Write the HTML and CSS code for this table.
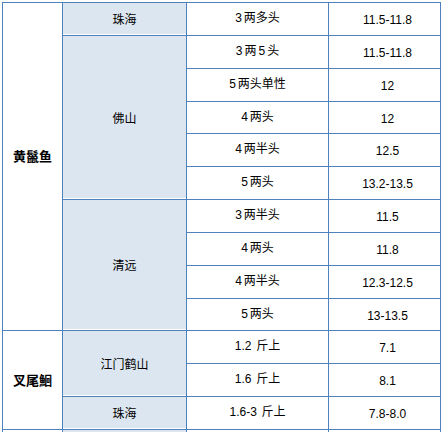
FILE: index.html
```html
<!DOCTYPE html>
<html lang="zh-CN">
<head>
<meta charset="utf-8">
<title>鱼价表</title>
<link rel="stylesheet" href="styles.css">
</head>
<body>
<table class="grid">
  <colgroup>
    <col class="c-fish">
    <col class="c-area">
    <col class="c-spec">
    <col class="c-price">
  </colgroup>
  <tbody>
    <tr class="r33">
      <td class="fish fish-top" rowspan="10">黄鬣鱼</td>
      <td class="area">珠海</td>
      <td class="spec"><span class="n">3</span>两多头</td>
      <td class="price">11.5-11.8</td>
    </tr>
    <tr class="r33">
      <td class="area" rowspan="5">佛山</td>
      <td class="spec"><span class="n">3</span>两<span class="n n-mid">5</span>头</td>
      <td class="price">11.5-11.8</td>
    </tr>
    <tr class="r33">
      <td class="spec"><span class="n">5</span>两头单性</td>
      <td class="price">12</td>
    </tr>
    <tr class="r32">
      <td class="spec"><span class="n">4</span>两头</td>
      <td class="price">12</td>
    </tr>
    <tr class="r33">
      <td class="spec"><span class="n">4</span>两半头</td>
      <td class="price">12.5</td>
    </tr>
    <tr class="r33">
      <td class="spec"><span class="n">5</span>两头</td>
      <td class="price">13.2-13.5</td>
    </tr>
    <tr class="r33">
      <td class="area" rowspan="4">清远</td>
      <td class="spec"><span class="n">3</span>两半头</td>
      <td class="price">11.5</td>
    </tr>
    <tr class="r33">
      <td class="spec"><span class="n">4</span>两头</td>
      <td class="price">11.8</td>
    </tr>
    <tr class="r33">
      <td class="spec"><span class="n">4</span>两半头</td>
      <td class="price">12.3-12.5</td>
    </tr>
    <tr class="r32">
      <td class="spec"><span class="n">5</span>两头</td>
      <td class="price">13-13.5</td>
    </tr>
    <tr class="r33">
      <td class="fish" rowspan="3">叉尾鮰</td>
      <td class="area" rowspan="2">江门鹤山</td>
      <td class="spec"><span class="n">1.2</span> 斤上</td>
      <td class="price">7.1</td>
    </tr>
    <tr class="r33">
      <td class="spec"><span class="n">1.6</span> 斤上</td>
      <td class="price">8.1</td>
    </tr>
    <tr class="r33">
      <td class="area">珠海</td>
      <td class="spec"><span class="n">1.6-3</span> 斤上</td>
      <td class="price">7.8-8.0</td>
    </tr>
    <tr class="r33">
      <td class="fish"></td>
      <td class="area"></td>
      <td class="spec"></td>
      <td class="price"></td>
    </tr>
  </tbody>
</table>
</body>
</html>
```

FILE: styles.css
```css
html, body {
  margin: 0;
  padding: 0;
  background: #ffffff;
}

body {
  padding: 2px 0 0 2px;
  font-family: "Liberation Sans", "Noto Sans CJK SC", sans-serif;
  font-size: 12px;
  color: #000000;
}

.grid {
  border-collapse: collapse;
  table-layout: fixed;
  width: 438px;
}

.c-fish { width: 60px; }
.c-area { width: 124px; }
.c-spec { width: 142px; }
.c-price { width: 112px; }

.grid td {
  border: 1px solid #4f81bd;
  padding: 0;
  text-align: center;
  vertical-align: middle;
  line-height: 14px;
  white-space: nowrap;
}

.r33 { height: 33px; }
.r32 { height: 32px; }

.fish {
  font-family: "Noto Sans CJK SC", sans-serif;
  font-weight: bold;
  font-size: 13px;
}

.fish-top {
  padding-bottom: 22px !important;
}

.area {
  background: #dce6f1;
  box-shadow: inset 0 -1px 0 #ffffff;
  font-family: "Noto Sans CJK SC", sans-serif;
  font-size: 12px;
}

.spec {
  font-family: "Noto Sans CJK SC", sans-serif;
  font-size: 12px;
  padding-bottom: 3px !important;
}

.n {
  font-family: "Liberation Sans Narrow", "Liberation Sans", sans-serif;
  font-size: 12px;
  margin-right: 2px;
}

.n-mid {
  margin-left: 2px;
}

.price {
  font-family: "Liberation Sans Narrow", "Liberation Sans", sans-serif;
  font-size: 12px;
  padding-top: 2px !important;
  padding-left: 6px !important;
}
```
